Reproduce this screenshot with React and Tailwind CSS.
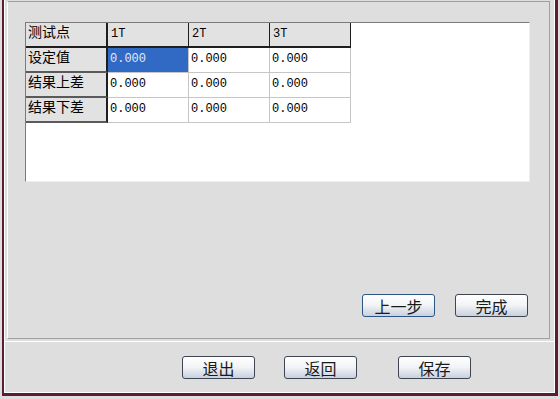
import React from 'react';

const cols = ['1T', '2T', '3T'];
const rows = ['设定值', '结果上差', '结果下差'];

const cjk = { fontFamily: '"Noto Sans CJK SC", "Noto Sans", sans-serif' };
const mono = { fontFamily: '"Liberation Mono", "DejaVu Sans Mono", monospace' };

const Button = ({ label, focused }) => (
  <button
    className={`w-[73px] h-[23px] rounded-[3px] border bg-linear-to-b from-white via-[#f1f3f6] to-[#c8d1dd] text-[16px] leading-[20px] text-[#1a1a1a] ${
      focused ? 'border-[#2c5487]' : 'border-[#3e4452]'
    }`}
    style={cjk}
  >
    {label}
  </button>
);

const HeadCell = ({ children, first }) => (
  <div
    className={`h-[25px] bg-[#e2e2e2] border-b-2 border-b-[#1e1e1e] ${
      first ? 'w-[82px] border-r-2 border-r-[#1e1e1e] pl-[2px] text-[14px] leading-[16px]' : 'w-[81px] border-r border-r-[#1e1e1e] pl-[3px] pt-[3px] text-[12px] leading-[16px]'
    } text-black`}
    style={first ? cjk : mono}
  >
    {children}
  </div>
);

const DataCell = ({ selected }) => (
  <div
    className={`w-[81px] h-[25px] border-r border-b border-[#c6c6c6] pl-[2px] pt-[3px] text-[12px] leading-[16px] ${
      selected ? 'bg-[#316ac5] text-[#e4ebf7]' : 'bg-white text-black'
    }`}
    style={mono}
  >
    0.000
  </div>
);

export default function App() {
  return (
    <div className="w-[560px] h-[399px] bg-[#dedede] pl-[2px] pr-[2px] pb-[3px]">
      <div className="h-full border-l-2 border-r-[3px] border-b-[3px] border-[#5c1e2e]">
        <div className="h-full flex flex-col border-l border-r border-b border-white">
          {/* upper panel */}
          <div className="mt-px ml-[2px] mr-[4px] h-[338px] border-t border-r border-b border-[#a0a0a0] border-l border-l-white flex flex-col">
            <div className="ml-[17px] mt-[20px] w-[505px] h-[160px] bg-white border-t border-l border-[#7a7a7a] border-r border-b border-r-[#eeeeee] border-b-[#eeeeee]">
              <div className="flex">
                <HeadCell first>测试点</HeadCell>
                {cols.map((c) => (
                  <HeadCell key={c}>{c}</HeadCell>
                ))}
              </div>
              {rows.map((r, i) => (
                <div key={r} className="flex">
                  <div
                    className="w-[82px] h-[25px] bg-[#e2e2e2] border-r-2 border-r-[#1e1e1e] border-b-2 border-b-[#5a5a5a] pl-[2px] text-[14px] leading-[16px] text-black"
                    style={cjk}
                  >
                    {r}
                  </div>
                  {cols.map((c, j) => (
                    <DataCell key={c} selected={i === 0 && j === 0} />
                  ))}
                </div>
              ))}
            </div>
            <div className="mt-[112px] flex justify-end gap-[20px] pr-[21px]">
              <Button label="上一步" focused />
              <Button label="完成" />
            </div>
          </div>
          <div className="mt-[2px] h-px bg-white" />
          {/* bottom bar */}
          <div className="flex-1 pt-[14px] pl-[177px] flex items-start">
            <Button label="退出" />
            <div className="ml-[29px]">
              <Button label="返回" />
            </div>
            <div className="ml-[41px]">
              <Button label="保存" />
            </div>
          </div>
        </div>
      </div>
    </div>
  );
}
